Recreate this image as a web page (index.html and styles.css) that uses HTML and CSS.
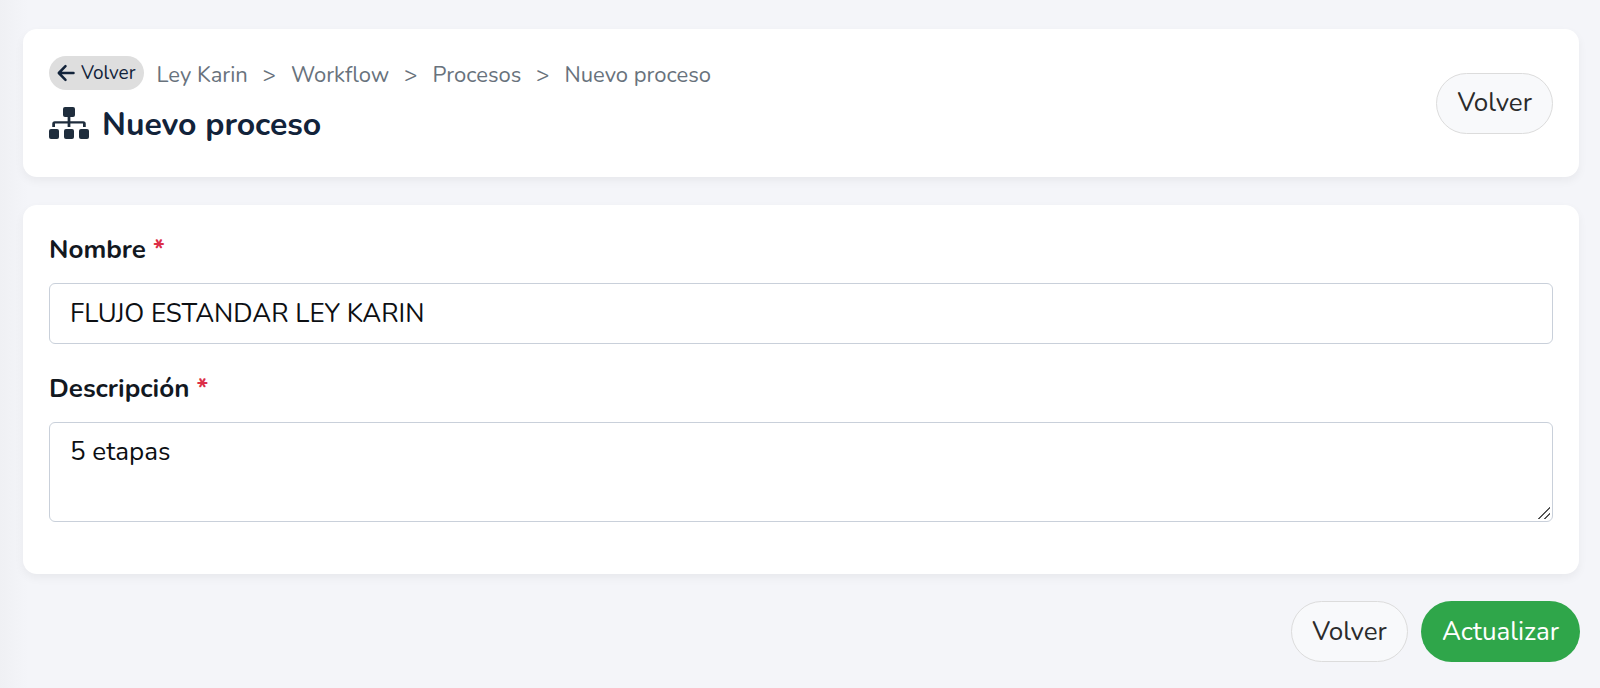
FILE: index.html
```html
<!DOCTYPE html>
<html lang="es">
<head>
<meta charset="utf-8">
<meta name="viewport" content="width=device-width, initial-scale=1">
<title>Nuevo proceso</title>
<link rel="stylesheet" href="styles.css">
</head>
<body>
<main class="page">
  <header class="card header">
    <div class="heading">
      <nav class="crumbs" aria-label="Ruta">
        <button type="button" class="back">
          <svg class="back-icon" viewBox="0 0 18 18" aria-hidden="true"><path d="M8.500 2.200 1.800 9l6.700 6.800M2.200 9H16.500" fill="none" stroke="currentColor" stroke-width="2.500" stroke-linecap="round" stroke-linejoin="round"/></svg>
          Volver
        </button>
        <ol class="trail">
          <li><a href="#">Ley Karin</a></li>
          <li><a href="#">Workflow</a></li>
          <li><a href="#">Procesos</a></li>
          <li aria-current="page">Nuevo proceso</li>
        </ol>
      </nav>
      <h1 class="title">
        <svg class="title-icon" viewBox="0 0 640 512" aria-hidden="true" fill="currentColor"><rect x="224" y="0" width="192" height="160" rx="32"/><rect x="0" y="352" width="160" height="160" rx="32"/><rect x="240" y="352" width="160" height="160" rx="32"/><rect x="480" y="352" width="160" height="160" rx="32"/><path d="M298 150h44v78h206q40 0 40 40v52h-44v-56H342v56h-44v-56H96v56H52v-52q0-40 40-40h206z"/></svg>
        Nuevo proceso
      </h1>
    </div>
    <button type="button" class="btn btn-light">Volver</button>
  </header>
  <form class="form">
    <section class="card fields">
      <div class="field">
        <label for="nombre">Nombre <span class="required">*</span></label>
        <input id="nombre" class="control" type="text" value="FLUJO ESTANDAR LEY KARIN" required>
      </div>
      <div class="field">
        <label for="descripcion">Descripción <span class="required">*</span></label>
        <textarea id="descripcion" class="control area" required>5 etapas</textarea>
      </div>
    </section>
    <div class="actions">
      <button type="button" class="btn btn-light">Volver</button>
      <button type="submit" class="btn btn-success">Actualizar</button>
    </div>
  </form>
</main>
</body>
</html>
```
FILE: styles.css
```css
* {
  box-sizing: border-box;
}

body {
  margin: 0;
  min-height: 100vh;
  background: linear-gradient(to right, #eff0f4, #f4f5f9 28px);
  color: #12181f;
  font-family: Nunito, Lato, sans-serif;
  font-size: 26px;
  line-height: 36px;
}

button,
input,
textarea {
  font: inherit;
}

.page {
  padding: 29px 20px 24px 23px;
}

.card {
  margin-right: 1px;
  padding: 26px;
  border-radius: 14px;
  background: #fff;
  box-shadow: 0 4px 10px rgba(0, 0, 0, 0.05);
}

.header {
  display: flex;
  align-items: center;
  justify-content: space-between;
  gap: 24px;
  margin-bottom: 28px;
}

.crumbs {
  display: flex;
  align-items: center;
  gap: 13px;
}

.back {
  display: flex;
  align-items: center;
  gap: 6px;
  height: 34px;
  padding: 0 8px;
  border: 0;
  border-radius: 17px;
  background: #dedede;
  color: #12233a;
  font-size: 19px;
}

.back-icon {
  width: 18px;
  height: 18px;
}

.trail {
  display: flex;
  flex-wrap: wrap;
  margin: 0;
  padding: 5px 0 0;
  list-style: none;
  color: #68727c;
  font-size: 22px;
  line-height: 30px;
}

.trail a {
  color: inherit;
  text-decoration: none;
}

.trail li + li::before {
  content: ">";
  padding: 0 15px;
}

.title {
  display: flex;
  align-items: flex-start;
  gap: 13px;
  margin: 15px 0 6px;
  color: #12233a;
  font-size: 32px;
  line-height: 40px;
}

.title-icon {
  width: 40px;
  height: 32px;
  margin-top: 2px;
  color: #1f2d3d;
}

.btn {
  height: 61px;
  padding: 0 20px;
  border: 1px solid transparent;
  border-radius: 31px;
}

.btn-light {
  border-color: #dcdcdc;
  background: #f8f9fb;
  color: #2b2b2b;
}

.btn-success {
  background: #2fa64a;
  color: #fff;
}

.fields {
  display: flex;
  flex-direction: column;
  gap: 26px;
  padding-bottom: 52px;
}

.field {
  display: flex;
  flex-direction: column;
  gap: 14px;
}

label {
  font-weight: 700;
  line-height: 38px;
}

.required {
  color: #dc2f48;
}

.control {
  display: block;
  width: 100%;
  height: 61px;
  padding: 11px 20px;
  border: 1px solid #c9d0da;
  border-radius: 6px;
  background: #fff;
  color: #0c0f13;
}

.area {
  height: 100px;
  resize: vertical;
}

.area::-webkit-resizer {
  background: linear-gradient(135deg, transparent 49%, #555 49%, #555 55%, transparent 55%, transparent 74%, #555 74%, #555 80%, transparent 80%) 1px 1px / 12px 12px no-repeat;
}

.actions {
  display: flex;
  justify-content: flex-end;
  gap: 13px;
  margin-top: 27px;
}
```
